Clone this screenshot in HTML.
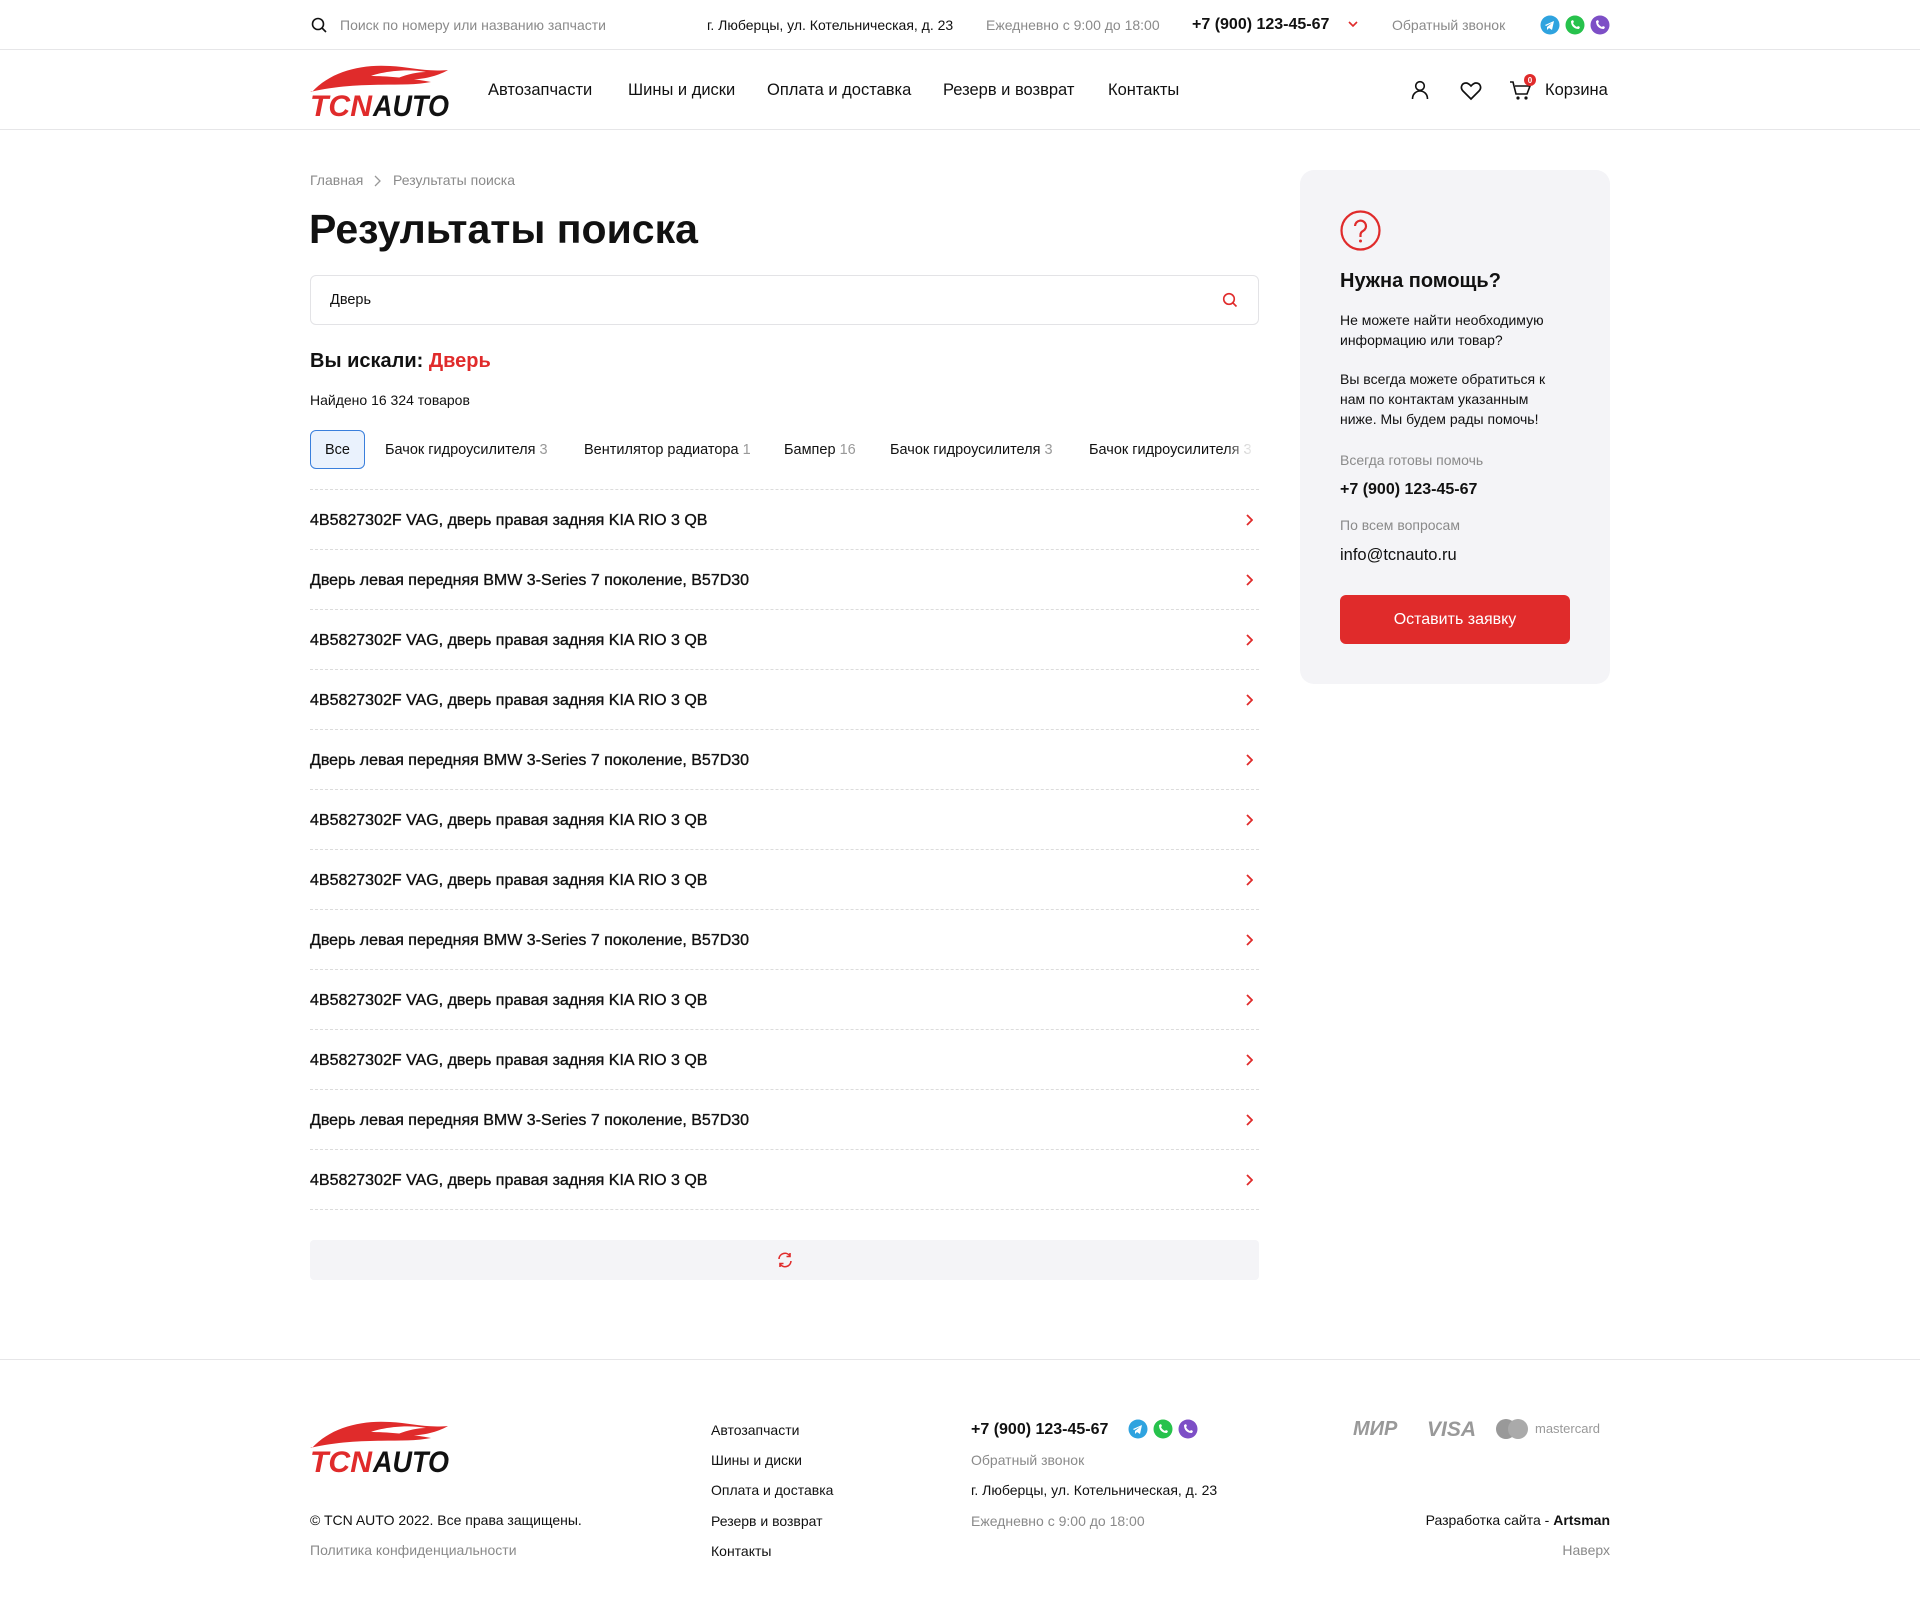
<!DOCTYPE html>
<html><head><meta charset="utf-8"><style>
*{margin:0;padding:0;box-sizing:border-box}
body{width:1920px;height:1620px;background:#fff;font-family:"Liberation Sans","Noto Sans CJK JP",sans-serif;color:#111;position:relative;overflow:hidden}
.a{position:absolute;white-space:nowrap}
.g{color:#8a8a8a}
.hr{position:absolute;left:0;width:1920px;height:1px;background:#e6e6e8}
.row{position:absolute;left:310px;width:949px;height:60px;border-bottom:1px dashed #dcdcdc;font-size:16px;line-height:62px;-webkit-text-stroke:0.35px #111}
.row svg{position:absolute;right:6px;top:24px}
.chip{position:absolute;top:430px;height:39px;line-height:41px;font-size:14.5px}
.chip span{color:#999}
</style></head><body>
<svg class="a" style="left:311px;top:17px" width="16" height="16" viewBox="0 0 16 16"><circle cx="7" cy="7" r="5.5" fill="none" stroke="#111" stroke-width="1.6"/><path d="M11 11l4 4" stroke="#111" stroke-width="1.6"/></svg>
<div class="a g" style="left:340px;top:17px;font-size:14px">Поиск по номеру или названию запчасти</div>
<div class="a" style="left:707px;top:17px;font-size:14px">г. Люберцы, ул. Котельническая, д. 23</div>
<div class="a g" style="left:986px;top:17px;font-size:14px">Ежедневно с 9:00 до 18:00</div>
<div class="a" style="left:1192px;top:16px;font-size:16px;font-weight:bold">+7 (900) 123-45-67</div>
<svg class="a" style="left:1348px;top:21px" width="10" height="7" viewBox="0 0 10 7"><path d="M1 1l4 4 4-4" fill="none" stroke="#e02b2b" stroke-width="1.6"/></svg>
<div class="a g" style="left:1392px;top:17px;font-size:14px">Обратный звонок</div>
<svg class="a" style="left:1540px;top:15px" width="70" height="20" viewBox="0 0 70 20"><circle cx="10" cy="10" r="9.5" fill="#2fa3df"/><path d="M5 10l9-4-2 9-3-2-2 2v-3l5-4-6 3z" fill="#fff"/><circle cx="35" cy="10" r="9.5" fill="#27c24c"/><path d="M31 6c0 5 3 8 8 8l1-2-2-1-1 1c-2-1-3-2-4-4l1-1-1-2z" fill="#fff"/><circle cx="60" cy="10" r="9.5" fill="#7d4fc6"/><path d="M56 6c0 5 3 8 8 8l1-2-2-1-1 1c-2-1-3-2-4-4l1-1-1-2z" fill="#fff"/></svg>
<div class="hr" style="top:49px"></div>
<svg class="a" style="left:310px;top:62px" width="140" height="56" viewBox="0 0 140 56"><path d="M2 30C20 10 50 2 80 4c20 1 35 6 58 4-10 6-30 12-50 8 10-4 20-6 28-6-20-4-45 0-55 4 15 0 40 2 60 6-30 6-70-2-121 10z" fill="#e02b2b"/><text x="0" y="54" font-family="Liberation Sans" font-weight="bold" font-style="italic" font-size="30" fill="#e02b2b" textLength="62" lengthAdjust="spacingAndGlyphs">TCN</text><text x="63" y="54" font-family="Liberation Sans" font-weight="bold" font-style="italic" font-size="30" fill="#111" textLength="76" lengthAdjust="spacingAndGlyphs">AUTO</text></svg>
<div class="a" style="left:488px;top:81px;font-size:16.5px">Автозапчасти</div>
<div class="a" style="left:628px;top:81px;font-size:16.5px">Шины и диски</div>
<div class="a" style="left:767px;top:81px;font-size:16.5px">Оплата и доставка</div>
<div class="a" style="left:943px;top:81px;font-size:16.5px">Резерв и возврат</div>
<div class="a" style="left:1108px;top:81px;font-size:16.5px">Контакты</div>
<svg class="a" style="left:1410px;top:80px" width="20" height="20" viewBox="0 0 20 20"><circle cx="10" cy="6" r="4.3" fill="none" stroke="#111" stroke-width="1.6"/><path d="M2.5 19c0-5 3.5-8 7.5-8s7.5 3 7.5 8" fill="none" stroke="#111" stroke-width="1.6"/></svg>
<svg class="a" style="left:1460px;top:81px" width="22" height="20" viewBox="0 0 22 20"><path d="M11 18L3 10C0 7 1.5 2 6 2c2.5 0 4 2 5 3 1-1 2.5-3 5-3 4.5 0 6 5 3 8z" fill="none" stroke="#111" stroke-width="1.7"/></svg>
<svg class="a" style="left:1508px;top:73px" width="30" height="30" viewBox="0 0 30 30"><path d="M2 9h3l3 12h11l3-8H7" fill="none" stroke="#111" stroke-width="1.6"/><circle cx="10" cy="25" r="1.6" fill="#111"/><circle cx="18" cy="25" r="1.6" fill="#111"/><circle cx="22" cy="7" r="6" fill="#e02b2b"/><text x="22" y="10" font-size="8" fill="#fff" text-anchor="middle" font-family="Liberation Sans" font-weight="bold">0</text></svg>
<div class="a" style="left:1545px;top:81px;font-size:16.5px">Корзина</div>
<div class="hr" style="top:129px"></div>
<div class="a g" style="left:310px;top:172px;font-size:14px">Главная</div>
<svg class="a" style="left:373px;top:175px" width="8" height="12" viewBox="0 0 8 12"><path d="M2 1l5 5-5 5" fill="none" stroke="#999" stroke-width="1.3"/></svg>
<div class="a g" style="left:393px;top:172px;font-size:14px">Результаты поиска</div>
<div class="a" style="left:309px;top:206px;font-size:41px;font-weight:bold">Результаты поиска</div>
<div class="a" style="left:310px;top:275px;width:949px;height:50px;border:1px solid #e3e3e6;border-radius:6px"></div>
<div class="a" style="left:330px;top:292px;font-size:14.5px">Дверь</div>
<svg class="a" style="left:1222px;top:292px" width="16" height="16" viewBox="0 0 16 16"><circle cx="7" cy="7" r="5.3" fill="none" stroke="#e02b2b" stroke-width="1.6"/><path d="M11 11l3.5 3.5" stroke="#e02b2b" stroke-width="1.6"/></svg>
<div class="a" style="left:310px;top:350px;font-size:20px;font-weight:bold">Вы искали: <span style="color:#e02b2b">Дверь</span></div>
<div class="a" style="left:310px;top:392px;font-size:14px">Найдено 16 324 товаров</div>
<div class="chip" style="left:310px;width:55px;text-align:center;background:#eaf2fd;border:1px solid #3a7fdc;border-radius:6px;line-height:39px">Все</div>
<div class="chip" style="left:385px">Бачок гидроусилителя <span>3</span></div>
<div class="chip" style="left:584px">Вентилятор радиатора <span>1</span></div>
<div class="chip" style="left:784px">Бампер <span>16</span></div>
<div class="chip" style="left:890px">Бачок гидроусилителя <span>3</span></div>
<div class="chip" style="left:1089px;width:170px;overflow:hidden;-webkit-mask-image:linear-gradient(90deg,#000 80%,transparent)">Бачок гидроусилителя <span>3</span></div>
<div class="a" style="left:310px;top:489px;width:949px;border-top:1px dashed #dcdcdc"></div>
<div class="row" style="top:490px">4B5827302F VAG, дверь правая задняя KIA RIO 3 QB<svg width="8" height="12" viewBox="0 0 8 12"><path d="M2 1l5 5-5 5" fill="none" stroke="#e02b2b" stroke-width="1.8"/></svg></div>
<div class="row" style="top:550px">Дверь левая передняя BMW 3-Series 7 поколение, B57D30<svg width="8" height="12" viewBox="0 0 8 12"><path d="M2 1l5 5-5 5" fill="none" stroke="#e02b2b" stroke-width="1.8"/></svg></div>
<div class="row" style="top:610px">4B5827302F VAG, дверь правая задняя KIA RIO 3 QB<svg width="8" height="12" viewBox="0 0 8 12"><path d="M2 1l5 5-5 5" fill="none" stroke="#e02b2b" stroke-width="1.8"/></svg></div>
<div class="row" style="top:670px">4B5827302F VAG, дверь правая задняя KIA RIO 3 QB<svg width="8" height="12" viewBox="0 0 8 12"><path d="M2 1l5 5-5 5" fill="none" stroke="#e02b2b" stroke-width="1.8"/></svg></div>
<div class="row" style="top:730px">Дверь левая передняя BMW 3-Series 7 поколение, B57D30<svg width="8" height="12" viewBox="0 0 8 12"><path d="M2 1l5 5-5 5" fill="none" stroke="#e02b2b" stroke-width="1.8"/></svg></div>
<div class="row" style="top:790px">4B5827302F VAG, дверь правая задняя KIA RIO 3 QB<svg width="8" height="12" viewBox="0 0 8 12"><path d="M2 1l5 5-5 5" fill="none" stroke="#e02b2b" stroke-width="1.8"/></svg></div>
<div class="row" style="top:850px">4B5827302F VAG, дверь правая задняя KIA RIO 3 QB<svg width="8" height="12" viewBox="0 0 8 12"><path d="M2 1l5 5-5 5" fill="none" stroke="#e02b2b" stroke-width="1.8"/></svg></div>
<div class="row" style="top:910px">Дверь левая передняя BMW 3-Series 7 поколение, B57D30<svg width="8" height="12" viewBox="0 0 8 12"><path d="M2 1l5 5-5 5" fill="none" stroke="#e02b2b" stroke-width="1.8"/></svg></div>
<div class="row" style="top:970px">4B5827302F VAG, дверь правая задняя KIA RIO 3 QB<svg width="8" height="12" viewBox="0 0 8 12"><path d="M2 1l5 5-5 5" fill="none" stroke="#e02b2b" stroke-width="1.8"/></svg></div>
<div class="row" style="top:1030px">4B5827302F VAG, дверь правая задняя KIA RIO 3 QB<svg width="8" height="12" viewBox="0 0 8 12"><path d="M2 1l5 5-5 5" fill="none" stroke="#e02b2b" stroke-width="1.8"/></svg></div>
<div class="row" style="top:1090px">Дверь левая передняя BMW 3-Series 7 поколение, B57D30<svg width="8" height="12" viewBox="0 0 8 12"><path d="M2 1l5 5-5 5" fill="none" stroke="#e02b2b" stroke-width="1.8"/></svg></div>
<div class="row" style="top:1150px">4B5827302F VAG, дверь правая задняя KIA RIO 3 QB<svg width="8" height="12" viewBox="0 0 8 12"><path d="M2 1l5 5-5 5" fill="none" stroke="#e02b2b" stroke-width="1.8"/></svg></div>
<div class="a" style="left:310px;top:1240px;width:949px;height:40px;background:#f4f4f7;border-radius:4px"></div>
<svg class="a" style="left:776px;top:1251px" width="18" height="18" viewBox="0 0 18 18"><path d="M3 8a6 6 0 0 1 11-3M15 10a6 6 0 0 1-11 3" fill="none" stroke="#e02b2b" stroke-width="1.6"/><path d="M14 2v3.5h-3.5M4 16v-3.5h3.5" fill="none" stroke="#e02b2b" stroke-width="1.6"/></svg>
<div class="a" style="left:1300px;top:170px;width:310px;height:514px;background:#f4f4f7;border-radius:14px"></div>
<svg class="a" style="left:1340px;top:210px" width="41" height="41" viewBox="0 0 41 41"><circle cx="20.5" cy="20.5" r="19" fill="none" stroke="#e02b2b" stroke-width="2.2"/><path d="M15 16a5.5 5.5 0 1 1 8 5c-2 1-2.5 2-2.5 4v2" fill="none" stroke="#e02b2b" stroke-width="2.2"/><circle cx="20.5" cy="31" r="1.5" fill="#e02b2b"/></svg>
<div class="a" style="left:1340px;top:270px;font-size:20px;font-weight:bold">Нужна помощь?</div>
<div class="a" style="left:1340px;top:310px;font-size:14px;line-height:20px">Не можете найти необходимую<br>информацию или товар?</div>
<div class="a" style="left:1340px;top:369px;font-size:14px;line-height:20px">Вы всегда можете обратиться к<br>нам по контактам указанным<br>ниже. Мы будем рады помочь!</div>
<div class="a g" style="left:1340px;top:452px;font-size:14px">Всегда готовы помочь</div>
<div class="a" style="left:1340px;top:481px;font-size:16px;font-weight:bold">+7 (900) 123-45-67</div>
<div class="a g" style="left:1340px;top:517px;font-size:14px">По всем вопросам</div>
<div class="a" style="left:1340px;top:546px;font-size:16.5px">info@tcnauto.ru</div>
<div class="a" style="left:1340px;top:595px;width:230px;height:49px;background:#e02b2b;border-radius:6px;color:#fff;text-align:center;line-height:50px;font-size:16px">Оставить заявку</div>
<div class="hr" style="top:1359px"></div>
<svg class="a" style="left:310px;top:1418px" width="140" height="56" viewBox="0 0 140 56"><path d="M2 30C20 10 50 2 80 4c20 1 35 6 58 4-10 6-30 12-50 8 10-4 20-6 28-6-20-4-45 0-55 4 15 0 40 2 60 6-30 6-70-2-121 10z" fill="#e02b2b"/><text x="0" y="54" font-family="Liberation Sans" font-weight="bold" font-style="italic" font-size="30" fill="#e02b2b" textLength="62" lengthAdjust="spacingAndGlyphs">TCN</text><text x="63" y="54" font-family="Liberation Sans" font-weight="bold" font-style="italic" font-size="30" fill="#111" textLength="76" lengthAdjust="spacingAndGlyphs">AUTO</text></svg>
<div class="a" style="left:310px;top:1512px;font-size:14px">© TCN AUTO 2022. Все права защищены.</div>
<div class="a g" style="left:310px;top:1542px;font-size:14px">Политика конфиденциальности</div>
<div class="a" style="left:711px;top:1422px;font-size:14px">Автозапчасти</div>
<div class="a" style="left:711px;top:1452px;font-size:14px">Шины и диски</div>
<div class="a" style="left:711px;top:1482px;font-size:14px">Оплата и доставка</div>
<div class="a" style="left:711px;top:1513px;font-size:14px">Резерв и возврат</div>
<div class="a" style="left:711px;top:1543px;font-size:14px">Контакты</div>
<div class="a" style="left:971px;top:1421px;font-size:16px;font-weight:bold">+7 (900) 123-45-67</div>
<svg class="a" style="left:1128px;top:1419px" width="70" height="20" viewBox="0 0 70 20"><circle cx="10" cy="10" r="9.5" fill="#2fa3df"/><path d="M5 10l9-4-2 9-3-2-2 2v-3l5-4-6 3z" fill="#fff"/><circle cx="35" cy="10" r="9.5" fill="#27c24c"/><path d="M31 6c0 5 3 8 8 8l1-2-2-1-1 1c-2-1-3-2-4-4l1-1-1-2z" fill="#fff"/><circle cx="60" cy="10" r="9.5" fill="#7d4fc6"/><path d="M56 6c0 5 3 8 8 8l1-2-2-1-1 1c-2-1-3-2-4-4l1-1-1-2z" fill="#fff"/></svg>
<div class="a g" style="left:971px;top:1452px;font-size:14px">Обратный звонок</div>
<div class="a" style="left:971px;top:1482px;font-size:14px">г. Люберцы, ул. Котельническая, д. 23</div>
<div class="a g" style="left:971px;top:1513px;font-size:14px">Ежедневно с 9:00 до 18:00</div>
<div class="a" style="left:1353px;top:1418px;font-size:20px;font-weight:bold;font-style:italic;color:#999">МИР</div>
<div class="a" style="left:1427px;top:1418px;font-size:21px;font-weight:bold;font-style:italic;color:#999">VISA</div>
<svg class="a" style="left:1495px;top:1418px" width="34" height="22" viewBox="0 0 34 22"><circle cx="11" cy="11" r="10" fill="#999"/><circle cx="23" cy="11" r="10" fill="#aaa"/></svg>
<div class="a" style="left:1535px;top:1421px;font-size:13px;color:#999">mastercard</div>
<div class="a" style="right:310px;top:1512px;font-size:14px">Разработка сайта - <b>Artsman</b></div>
<div class="a g" style="right:310px;top:1542px;font-size:14px">Наверх</div>
</body></html>
